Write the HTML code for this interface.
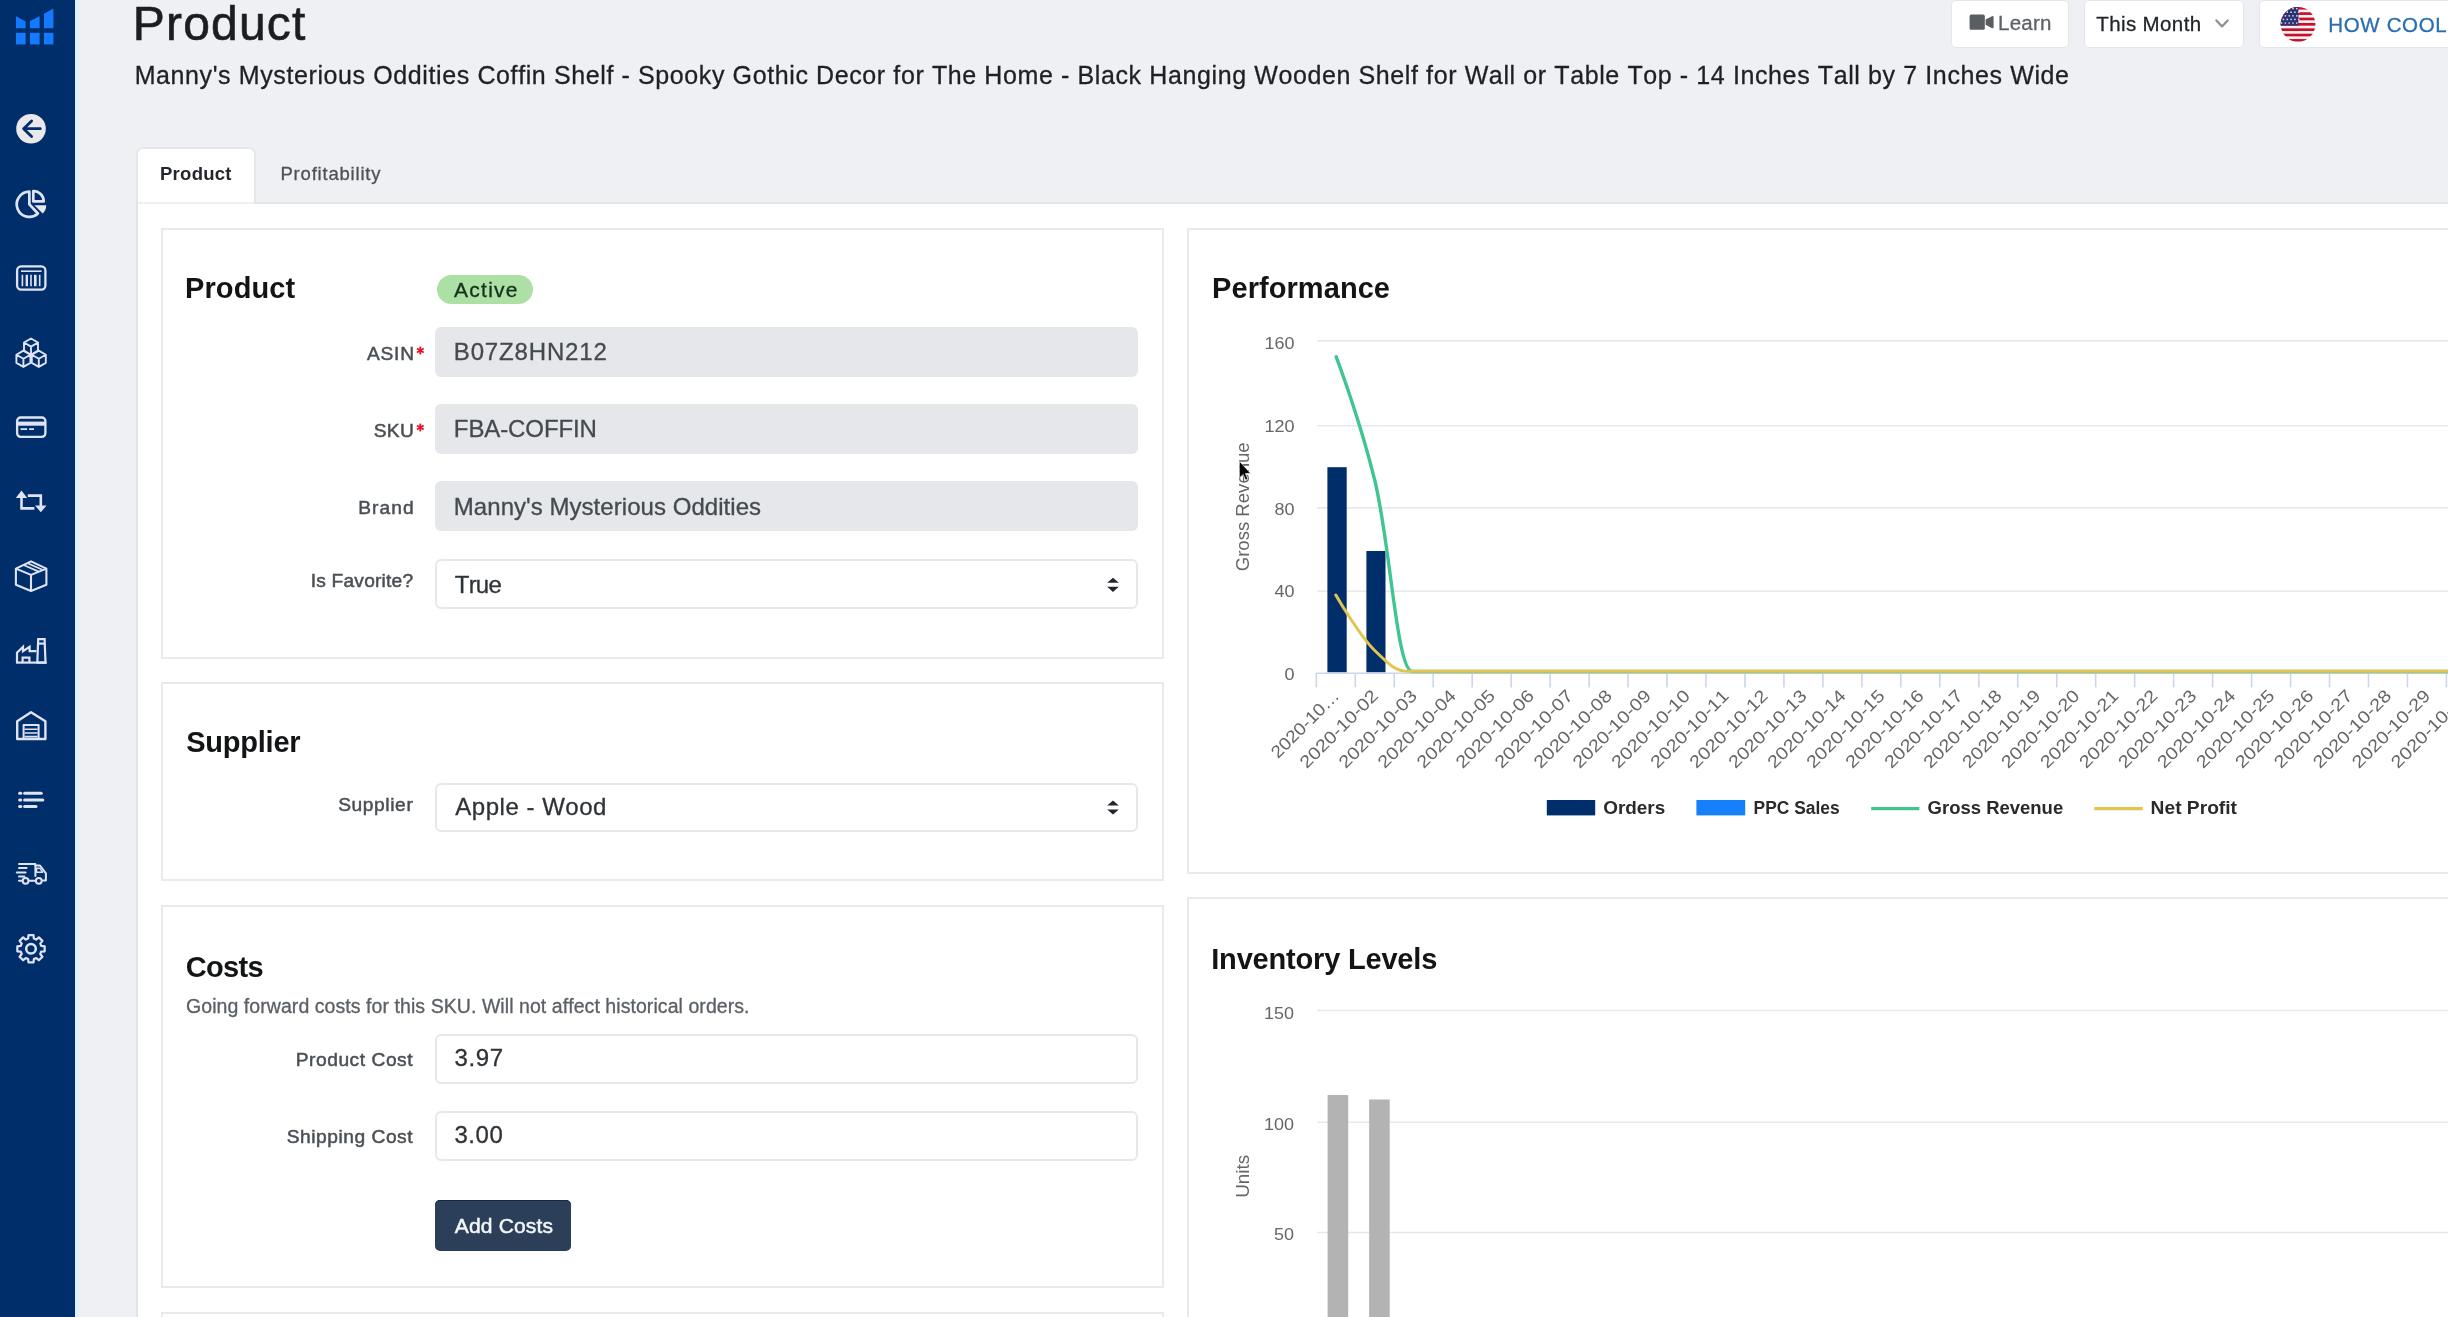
<!DOCTYPE html>
<html lang="en"><head><meta charset="utf-8"><title>Product</title>
<style>
html,body{margin:0;padding:0;}
body{width:2448px;height:1317px;overflow:hidden;background:#eef0f4;position:relative;
font-family:"Liberation Sans",sans-serif;font-kerning:none;-webkit-font-smoothing:antialiased;}
#wrap{position:absolute;left:0;top:0;width:2448px;height:1317px;overflow:hidden;will-change:transform;}
.t{position:absolute;white-space:nowrap;margin:0;padding:0;}
.r{position:absolute;}
svg.ov{position:absolute;left:0;top:0;}
svg text{font-family:"Liberation Sans",sans-serif;}
</style></head><body><div id="wrap">
<div class="r" style="left:0px;top:0px;width:75px;height:1317px;background:#002e6b;"></div>
<div class="r" style="left:75px;top:0px;width:4px;height:1317px;background:#e2effc;"></div>
<div class="r" style="left:79px;top:0px;width:1px;height:1317px;background:#e9f1f9;"></div>
<div class="t" style="left:132.76px;top:-5.74px;font-size:48px;line-height:60px;color:#1b1e21;letter-spacing:1.195px;-webkit-text-stroke:0.6px #1b1e21;">Product</div>
<div class="t" style="left:134.65px;top:59.33px;font-size:25px;line-height:32px;color:#1d2024;letter-spacing:0.609px;-webkit-text-stroke:0.3px #1d2024;">Manny&#x27;s Mysterious Oddities Coffin Shelf - Spooky Gothic Decor for The Home - Black Hanging Wooden Shelf for Wall or Table Top - 14 Inches Tall by 7 Inches Wide</div>
<div class="r" style="left:1951px;top:0px;width:118px;height:48px;background:#fff;border:1px solid #e3e6ea;border-radius:5px;box-sizing:border-box;"></div>
<div class="r" style="left:2084px;top:0px;width:160px;height:48px;background:#fff;border:1px solid #e3e6ea;border-radius:5px;box-sizing:border-box;"></div>
<div class="r" style="left:2259px;top:0px;width:220px;height:48px;background:#fff;border:1px solid #e3e6ea;border-radius:5px;box-sizing:border-box;"></div>
<div class="t" style="left:1998.12px;top:9.99px;font-size:20.5px;line-height:26px;color:#5a6268;letter-spacing:0.195px;-webkit-text-stroke:0.3px #5a6268;">Learn</div>
<div class="t" style="left:2096.24px;top:10.99px;font-size:20.5px;line-height:26px;color:#1f2327;letter-spacing:0.388px;-webkit-text-stroke:0.3px #1f2327;">This Month</div>
<div class="t" style="left:2328.32px;top:12.09px;font-size:20.5px;line-height:26px;color:#2a6fb0;letter-spacing:0.639px;-webkit-text-stroke:0.3px #2a6fb0;">HOW COOL</div>
<div class="r" style="left:136px;top:147px;width:120px;height:57px;background:#fff;border:2px solid #e4e7eb;border-radius:7px 7px 0 0;box-sizing:border-box;border-bottom:none;"></div>
<div class="r" style="left:136px;top:202px;width:2330px;height:1200px;background:#fff;border:2px solid #e1e4e8;box-sizing:border-box;"></div>
<div class="r" style="left:138px;top:202px;width:116px;height:2px;background:#edeff2;"></div>
<div class="t" style="left:159.96px;top:161.89px;font-size:18.5px;line-height:24px;color:#23272b;letter-spacing:0.279px;font-weight:bold;">Product</div>
<div class="t" style="left:280.48px;top:162.09px;font-size:18.5px;line-height:24px;color:#4b5157;letter-spacing:0.798px;-webkit-text-stroke:0.3px #4b5157;">Profitability</div>
<div class="r" style="left:161px;top:228px;width:1003px;height:431px;background:#fff;border:2px solid #e8ebee;box-sizing:border-box;"></div>
<div class="r" style="left:161px;top:682px;width:1003px;height:199px;background:#fff;border:2px solid #e8ebee;box-sizing:border-box;"></div>
<div class="r" style="left:161px;top:905px;width:1003px;height:383px;background:#fff;border:2px solid #e8ebee;box-sizing:border-box;"></div>
<div class="r" style="left:161px;top:1312px;width:1003px;height:88px;background:#fff;border:2px solid #e8ebee;box-sizing:border-box;"></div>
<div class="r" style="left:1187px;top:228px;width:1300px;height:646px;background:#fff;border:2px solid #e8ebee;box-sizing:border-box;"></div>
<div class="r" style="left:1187px;top:897px;width:1300px;height:503px;background:#fff;border:2px solid #e8ebee;box-sizing:border-box;"></div>
<div class="t" style="left:185.06px;top:270.45px;font-size:29px;line-height:37px;color:#121416;letter-spacing:0.089px;font-weight:bold;">Product</div>
<div class="r" style="left:437px;top:275px;width:96px;height:29px;background:#ace0a5;border-radius:15px;"></div>
<div class="t" style="left:453.96px;top:275.82px;font-size:21px;line-height:27px;color:#12301a;letter-spacing:1.278px;-webkit-text-stroke:0.3px #12301a;">Active</div>
<div class="r" style="left:435px;top:327px;width:703px;height:50px;background:#e5e7eb;border-radius:6px;"></div>
<div class="t" style="left:366.96px;top:341.54px;font-size:19.2px;line-height:24px;color:#4a4f54;letter-spacing:0.764px;-webkit-text-stroke:0.5px #4a4f54;">ASIN</div>
<div class="t" style="left:453.83px;top:337.48px;font-size:24px;line-height:30px;color:#434a50;letter-spacing:0.840px;-webkit-text-stroke:0.3px #434a50;">B07Z8HN212</div>
<div class="r" style="left:435px;top:404px;width:703px;height:50px;background:#e5e7eb;border-radius:6px;"></div>
<div class="t" style="left:373.63px;top:418.54px;font-size:19.2px;line-height:24px;color:#4a4f54;letter-spacing:0.438px;-webkit-text-stroke:0.5px #4a4f54;">SKU</div>
<div class="t" style="left:453.83px;top:414.18px;font-size:24px;line-height:30px;color:#434a50;letter-spacing:-0.096px;-webkit-text-stroke:0.3px #434a50;">FBA-COFFIN</div>
<div class="r" style="left:435px;top:481px;width:703px;height:50px;background:#e5e7eb;border-radius:6px;"></div>
<div class="t" style="left:358.23px;top:496.44px;font-size:19.2px;line-height:24px;color:#4a4f54;letter-spacing:1.070px;-webkit-text-stroke:0.5px #4a4f54;">Brand</div>
<div class="t" style="left:453.83px;top:491.78px;font-size:24px;line-height:30px;color:#434a50;letter-spacing:0.047px;-webkit-text-stroke:0.3px #434a50;">Manny&#x27;s Mysterious Oddities</div>
<div class="r" style="left:435px;top:559px;width:703px;height:50px;background:#fff;border:2px solid #e6e9ec;border-radius:6px;box-sizing:border-box;"></div>
<div class="t" style="left:310.73px;top:569.24px;font-size:19.2px;line-height:24px;color:#4a4f54;letter-spacing:0.198px;-webkit-text-stroke:0.5px #4a4f54;">Is Favorite?</div>
<div class="t" style="left:454.76px;top:570.28px;font-size:24px;line-height:30px;color:#2e3338;letter-spacing:-0.781px;-webkit-text-stroke:0.3px #2e3338;">True</div>
<div class="t" style="left:186.16px;top:724.45px;font-size:29px;line-height:37px;color:#121416;letter-spacing:-0.220px;font-weight:bold;">Supplier</div>
<div class="r" style="left:435px;top:783px;width:703px;height:49px;background:#fff;border:2px solid #e6e9ec;border-radius:6px;box-sizing:border-box;"></div>
<div class="t" style="left:338.13px;top:792.94px;font-size:19.2px;line-height:24px;color:#4a4f54;letter-spacing:0.607px;-webkit-text-stroke:0.5px #4a4f54;">Supplier</div>
<div class="t" style="left:455.25px;top:792.18px;font-size:24px;line-height:30px;color:#2e3338;letter-spacing:0.526px;-webkit-text-stroke:0.3px #2e3338;">Apple - Wood</div>
<div class="t" style="left:185.81px;top:948.65px;font-size:29px;line-height:37px;color:#121416;letter-spacing:-0.673px;font-weight:bold;">Costs</div>
<div class="t" style="left:186.02px;top:993.94px;font-size:19.5px;line-height:25px;color:#5b6065;letter-spacing:0.064px;-webkit-text-stroke:0.3px #5b6065;">Going forward costs for this SKU. Will not affect historical orders.</div>
<div class="r" style="left:435px;top:1034px;width:703px;height:50px;background:#fff;border:2px solid #e6e9ec;border-radius:6px;box-sizing:border-box;"></div>
<div class="t" style="left:295.73px;top:1047.74px;font-size:19.2px;line-height:24px;color:#4a4f54;letter-spacing:0.539px;-webkit-text-stroke:0.5px #4a4f54;">Product Cost</div>
<div class="t" style="left:454.39px;top:1043.38px;font-size:24px;line-height:30px;color:#2e3338;letter-spacing:0.703px;-webkit-text-stroke:0.3px #2e3338;">3.97</div>
<div class="r" style="left:435px;top:1111px;width:703px;height:50px;background:#fff;border:2px solid #e6e9ec;border-radius:6px;box-sizing:border-box;"></div>
<div class="t" style="left:286.63px;top:1124.54px;font-size:19.2px;line-height:24px;color:#4a4f54;letter-spacing:0.539px;-webkit-text-stroke:0.5px #4a4f54;">Shipping Cost</div>
<div class="t" style="left:454.39px;top:1120.28px;font-size:24px;line-height:30px;color:#2e3338;letter-spacing:0.614px;-webkit-text-stroke:0.3px #2e3338;">3.00</div>
<div class="r" style="left:435px;top:1200px;width:136px;height:51px;background:#2c3f58;border-radius:5px;box-shadow:inset 0 1px 0 #16264a;"></div>
<div class="t" style="left:454.86px;top:1211.52px;font-size:21px;line-height:27px;color:#f4f8fc;letter-spacing:0.153px;-webkit-text-stroke:0.5px #f4f8fc;">Add Costs</div>
<div class="t" style="left:1212.06px;top:270.45px;font-size:29px;line-height:37px;color:#121416;letter-spacing:0.063px;font-weight:bold;">Performance</div>
<div class="t" style="left:1211.26px;top:941.05px;font-size:29px;line-height:37px;color:#121416;letter-spacing:-0.189px;font-weight:bold;">Inventory Levels</div>
<svg class="ov" width="2448" height="1317" viewBox="0 0 2448 1317">
<g fill="#137bff">
<rect x="16" y="32.8" width="9.6" height="11.6"/>
<rect x="30" y="32.8" width="9.6" height="11.6"/>
<rect x="44" y="32.8" width="9.4" height="11.6"/>
<polygon points="16,16.3 25.6,21.4 25.6,28.3 16,28.3"/>
<polygon points="30,21 39.6,16.3 39.6,28.3 30,28.3"/>
<polygon points="44,13.7 53.4,8.6 53.4,28.3 44,28.3"/>
</g>
<circle cx="31" cy="128.7" r="14.8" fill="#e9e9ec"/>
<path d="M40.3 128.7 H23.6 M31.6 120.9 L23.6 128.7 L31.6 136.6" fill="none" stroke="#002e6b" stroke-width="2.8" stroke-linecap="round" stroke-linejoin="round"/>
<g fill="none" stroke="#dfe3f3" stroke-width="2.7" stroke-linejoin="round">
<path d="M29.35 191.70000000000002 A12.6 12.6 0 1 0 37.94 213.52 L29.35 204.3 Z"/>
<path d="M33.3 191.0 A10.4 10.4 0 0 1 43.699999999999996 201.4 L33.3 201.4 Z"/>
</g>
<path d="M34.4 205.2 L46.2 205.2 A11.8 11.8 0 0 1 42.74 213.54 Z" fill="#e9e9ec"/>
<rect x="17.1" y="266.4" width="28.3" height="23.2" rx="4" fill="none" stroke="#dfe3f3" stroke-width="2.3"/>
<path d="M21 271.2 H41.6" stroke="#dfe3f3" stroke-width="1.6"/>
<g stroke="#dfe3f3">
<path d="M22.4 274.8 V286.2" stroke-width="1.6"/>
<path d="M26.8 274.8 V286.2" stroke-width="2.4"/>
<path d="M31.0 274.8 V286.2" stroke-width="1.6"/>
<path d="M35.3 274.8 V286.2" stroke-width="2.6"/>
<path d="M39.7 274.8 V286.2" stroke-width="1.6"/>
</g>
<g fill="none" stroke="#dfe3f3" stroke-width="1.9" stroke-linejoin="round">
<path d="M31.00 338.48 L38.00 342.54 L38.00 350.66 L31.00 354.72 L24.00 350.66 L24.00 342.54 Z M24.00 342.54 L31 346.6 L38.00 342.54 M31 346.6 V354.72"/>
<path d="M23.40 350.68 L30.40 354.74 L30.40 362.86 L23.40 366.92 L16.40 362.86 L16.40 354.74 Z M16.40 354.74 L23.4 358.8 L30.40 354.74 M23.4 358.8 V366.92"/>
<path d="M38.80 350.68 L45.80 354.74 L45.80 362.86 L38.80 366.92 L31.80 362.86 L31.80 354.74 Z M31.80 354.74 L38.8 358.8 L45.80 354.74 M38.8 358.8 V366.92"/>
</g>
<rect x="17.1" y="417.5" width="28.3" height="19.4" rx="3.6" fill="none" stroke="#dfe3f3" stroke-width="2.3"/>
<rect x="17.1" y="421.6" width="28.3" height="4.1" fill="#dfe3f3"/>
<path d="M20.6 429.2 H27.2 M29.2 429.2 H34" stroke="#dfe3f3" stroke-width="1.7"/>
<g fill="none" stroke="#dfe3f3" stroke-width="2.6" stroke-linejoin="miter">
<path d="M21.5 496.5 V508.4 H34.4"/>
<path d="M27.8 495.6 H40.8 V507"/>
</g>
<polygon points="21.5,490.6 27.2,497.9 15.8,497.9" fill="#dfe3f3"/>
<polygon points="40.8,512.3 46.5,505.6 35.1,505.6" fill="#dfe3f3"/>
<g fill="none" stroke="#dfe3f3" stroke-width="2.1" stroke-linejoin="round">
<path d="M31 561.4 L46.4 568.6 V584.8 L31 591 L15.9 584.8 V568.6 Z"/>
<path d="M15.9 568.6 L31 574.9 L46.4 568.6 M31 574.9 V591"/>
<path d="M23.6 565 L38.7 571.6 M27.6 563.2 L42.4 569.8" stroke-width="1.7"/>
</g>
<g fill="none" stroke="#dfe3f3" stroke-width="2.2" stroke-linejoin="miter">
<path d="M17 662.6 V652.6 L23 646.8 V651.2 L29.6 646.8 V651.2 H36.4"/>
<path d="M38.2 639.2 H44.6 L45.5 662.6 H37.3 Z"/>
<path d="M38 643.6 H45"/>
<path d="M16 662.6 H46.6"/>
<path d="M22.6 662.6 V657.6 H29.4 V662.6"/>
</g>
<g fill="none" stroke="#dfe3f3" stroke-width="2.4" stroke-linejoin="round">
<path d="M17.2 739 V721.2 L31 712.2 L45.4 721.2 V739 Z"/>
<path d="M23.6 739 V725 H38.6 V739" stroke-width="2"/>
<path d="M24.6 729.2 H37.6 M24.6 733 H37.6 M24.6 736.6 H37.6" stroke-width="1.6"/>
</g>
<g stroke="#dfe3f3" stroke-width="3" stroke-linecap="round">
<path d="M24.6 793.2 H41.2"/>
<path d="M19.6 793.2 H20.8"/>
<path d="M24.6 799.9 H42.8"/>
<path d="M19.6 799.9 H20.8"/>
<path d="M24.6 806.6 H36"/>
<path d="M19.6 806.6 H20.8"/>
</g>
<g fill="none" stroke="#dfe3f3" stroke-width="2" stroke-linejoin="round" stroke-linecap="round">
<path d="M19 864 H35.4 V876"/>
<path d="M35.4 865.6 H40 L45.9 873.4 V880.6 H43"/>
<path d="M36.6 868.2 H39.6 L42.6 872.2 H36.6 Z" stroke-width="1.4"/>
<path d="M19 868 H26.6 M16.8 872.4 H25.6 M19 876.4 H24.4"/>
<path d="M19 880.8 H22.4 M28.8 880.8 H35.4"/>
<circle cx="25.6" cy="880.8" r="2.9"/>
<circle cx="38.8" cy="880.8" r="2.9"/>
</g>
<g fill="none" stroke="#dfe3f3" stroke-width="2.2" stroke-linejoin="round">
<path d="M41.20 945.92 L44.67 946.30 L44.67 951.30 L41.20 951.68 L40.25 953.98 L42.43 956.70 L38.90 960.23 L36.18 958.05 L33.88 959.00 L33.50 962.47 L28.50 962.47 L28.12 959.00 L25.82 958.05 L23.10 960.23 L19.57 956.70 L21.75 953.98 L20.80 951.68 L17.33 951.30 L17.33 946.30 L20.80 945.92 L21.75 943.62 L19.57 940.90 L23.10 937.37 L25.82 939.55 L28.12 938.60 L28.50 935.13 L33.50 935.13 L33.88 938.60 L36.18 939.55 L38.90 937.37 L42.43 940.90 L40.25 943.62 Z" transform="rotate(-90 31 948.8)"/>
<circle cx="31" cy="948.8" r="4.8" stroke-width="2.5"/>
</g>
<rect x="1969.6" y="14.6" width="15.2" height="15.2" rx="1.6" fill="#595e63"/>
<path d="M1985.6 19.6 L1992 16.2 Q1993.6 15.8 1993.6 17.4 V27 Q1993.6 28.6 1992 28.2 L1985.6 24.8 Z" fill="#595e63"/>
<path d="M2216.4 20.4 L2222 26.4 L2227.6 20.4" fill="none" stroke="#8a8f94" stroke-width="2.2" stroke-linecap="round" stroke-linejoin="round"/>
<defs><clipPath id="fc"><circle cx="2298" cy="24.3" r="17.4"/></clipPath></defs>
<g clip-path="url(#fc)">
<rect x="2278" y="4" width="40" height="40" fill="#f4f1f1"/>
<rect x="2278" y="6.90" width="40" height="2.68" fill="#c8102e"/>
<rect x="2278" y="12.26" width="40" height="2.68" fill="#c8102e"/>
<rect x="2278" y="17.62" width="40" height="2.68" fill="#c8102e"/>
<rect x="2278" y="22.98" width="40" height="2.68" fill="#c8102e"/>
<rect x="2278" y="28.34" width="40" height="2.68" fill="#c8102e"/>
<rect x="2278" y="33.70" width="40" height="2.68" fill="#c8102e"/>
<rect x="2278" y="39.06" width="40" height="2.68" fill="#c8102e"/>
<rect x="2278" y="4" width="20.4" height="21.6" fill="#2a3274"/>
<circle cx="2281.6" cy="8.6" r="0.85" fill="#d9dbe8"/>
<circle cx="2285.4" cy="8.6" r="0.85" fill="#d9dbe8"/>
<circle cx="2289.2" cy="8.6" r="0.85" fill="#d9dbe8"/>
<circle cx="2293.0" cy="8.6" r="0.85" fill="#d9dbe8"/>
<circle cx="2296.8" cy="8.6" r="0.85" fill="#d9dbe8"/>
<circle cx="2283.5" cy="12.2" r="0.85" fill="#d9dbe8"/>
<circle cx="2287.3" cy="12.2" r="0.85" fill="#d9dbe8"/>
<circle cx="2291.1" cy="12.2" r="0.85" fill="#d9dbe8"/>
<circle cx="2294.9" cy="12.2" r="0.85" fill="#d9dbe8"/>
<circle cx="2298.7" cy="12.2" r="0.85" fill="#d9dbe8"/>
<circle cx="2281.6" cy="15.8" r="0.85" fill="#d9dbe8"/>
<circle cx="2285.4" cy="15.8" r="0.85" fill="#d9dbe8"/>
<circle cx="2289.2" cy="15.8" r="0.85" fill="#d9dbe8"/>
<circle cx="2293.0" cy="15.8" r="0.85" fill="#d9dbe8"/>
<circle cx="2296.8" cy="15.8" r="0.85" fill="#d9dbe8"/>
<circle cx="2283.5" cy="19.4" r="0.85" fill="#d9dbe8"/>
<circle cx="2287.3" cy="19.4" r="0.85" fill="#d9dbe8"/>
<circle cx="2291.1" cy="19.4" r="0.85" fill="#d9dbe8"/>
<circle cx="2294.9" cy="19.4" r="0.85" fill="#d9dbe8"/>
<circle cx="2298.7" cy="19.4" r="0.85" fill="#d9dbe8"/>
<circle cx="2281.6" cy="23.0" r="0.85" fill="#d9dbe8"/>
<circle cx="2285.4" cy="23.0" r="0.85" fill="#d9dbe8"/>
<circle cx="2289.2" cy="23.0" r="0.85" fill="#d9dbe8"/>
<circle cx="2293.0" cy="23.0" r="0.85" fill="#d9dbe8"/>
<circle cx="2296.8" cy="23.0" r="0.85" fill="#d9dbe8"/>
</g>
<g stroke="#e0182c" stroke-width="1.9" stroke-linecap="butt">
<path d="M420.3 350.5 L420.30 346.60"/>
<path d="M420.3 350.5 L423.68 348.55"/>
<path d="M420.3 350.5 L423.68 352.45"/>
<path d="M420.3 350.5 L420.30 354.40"/>
<path d="M420.3 350.5 L416.92 348.55"/>
<path d="M420.3 350.5 L416.92 352.45"/>
</g>
<g stroke="#e0182c" stroke-width="1.9" stroke-linecap="butt">
<path d="M420.3 427.5 L420.30 423.60"/>
<path d="M420.3 427.5 L423.68 425.55"/>
<path d="M420.3 427.5 L423.68 429.45"/>
<path d="M420.3 427.5 L420.30 431.40"/>
<path d="M420.3 427.5 L416.92 425.55"/>
<path d="M420.3 427.5 L416.92 429.45"/>
</g>
<polygon points="1107.2,582.8 1118.8,582.8 1113,577.8" fill="#22262a"/>
<polygon points="1107.2,586.8 1118.8,586.8 1113,592" fill="#22262a"/>
<polygon points="1107.2,805.4 1118.8,805.4 1113,800.4" fill="#22262a"/>
<polygon points="1107.2,809.4 1118.8,809.4 1113,814.6" fill="#22262a"/>
<path d="M1317 340.9 H2448" stroke="#e7e8ea" stroke-width="1.6"/>
<path d="M1317 425.7 H2448" stroke="#e7e8ea" stroke-width="1.6"/>
<path d="M1317 507.9 H2448" stroke="#e7e8ea" stroke-width="1.6"/>
<path d="M1317 591.2 H2448" stroke="#e7e8ea" stroke-width="1.6"/>
<path d="M1316.3 673.2 H2448" stroke="#ccd6eb" stroke-width="1.6"/>
<path d="M1316.30 673 V687.4" stroke="#ccd6eb" stroke-width="1.6"/>
<path d="M1355.27 673 V687.4" stroke="#ccd6eb" stroke-width="1.6"/>
<path d="M1394.24 673 V687.4" stroke="#ccd6eb" stroke-width="1.6"/>
<path d="M1433.21 673 V687.4" stroke="#ccd6eb" stroke-width="1.6"/>
<path d="M1472.18 673 V687.4" stroke="#ccd6eb" stroke-width="1.6"/>
<path d="M1511.15 673 V687.4" stroke="#ccd6eb" stroke-width="1.6"/>
<path d="M1550.12 673 V687.4" stroke="#ccd6eb" stroke-width="1.6"/>
<path d="M1589.09 673 V687.4" stroke="#ccd6eb" stroke-width="1.6"/>
<path d="M1628.06 673 V687.4" stroke="#ccd6eb" stroke-width="1.6"/>
<path d="M1667.03 673 V687.4" stroke="#ccd6eb" stroke-width="1.6"/>
<path d="M1706.00 673 V687.4" stroke="#ccd6eb" stroke-width="1.6"/>
<path d="M1744.97 673 V687.4" stroke="#ccd6eb" stroke-width="1.6"/>
<path d="M1783.94 673 V687.4" stroke="#ccd6eb" stroke-width="1.6"/>
<path d="M1822.91 673 V687.4" stroke="#ccd6eb" stroke-width="1.6"/>
<path d="M1861.88 673 V687.4" stroke="#ccd6eb" stroke-width="1.6"/>
<path d="M1900.85 673 V687.4" stroke="#ccd6eb" stroke-width="1.6"/>
<path d="M1939.82 673 V687.4" stroke="#ccd6eb" stroke-width="1.6"/>
<path d="M1978.79 673 V687.4" stroke="#ccd6eb" stroke-width="1.6"/>
<path d="M2017.76 673 V687.4" stroke="#ccd6eb" stroke-width="1.6"/>
<path d="M2056.73 673 V687.4" stroke="#ccd6eb" stroke-width="1.6"/>
<path d="M2095.70 673 V687.4" stroke="#ccd6eb" stroke-width="1.6"/>
<path d="M2134.67 673 V687.4" stroke="#ccd6eb" stroke-width="1.6"/>
<path d="M2173.64 673 V687.4" stroke="#ccd6eb" stroke-width="1.6"/>
<path d="M2212.61 673 V687.4" stroke="#ccd6eb" stroke-width="1.6"/>
<path d="M2251.58 673 V687.4" stroke="#ccd6eb" stroke-width="1.6"/>
<path d="M2290.55 673 V687.4" stroke="#ccd6eb" stroke-width="1.6"/>
<path d="M2329.52 673 V687.4" stroke="#ccd6eb" stroke-width="1.6"/>
<path d="M2368.49 673 V687.4" stroke="#ccd6eb" stroke-width="1.6"/>
<path d="M2407.46 673 V687.4" stroke="#ccd6eb" stroke-width="1.6"/>
<path d="M2446.43 673 V687.4" stroke="#ccd6eb" stroke-width="1.6"/>
<text x="1294.4" y="349.2" font-size="17" fill="#666666" text-anchor="end" textLength="30.0" lengthAdjust="spacingAndGlyphs">160</text>
<text x="1294.4" y="432.0" font-size="17" fill="#666666" text-anchor="end" textLength="30.0" lengthAdjust="spacingAndGlyphs">120</text>
<text x="1294.4" y="514.7" font-size="17" fill="#666666" text-anchor="end" textLength="20.0" lengthAdjust="spacingAndGlyphs">80</text>
<text x="1294.4" y="597.4" font-size="17" fill="#666666" text-anchor="end" textLength="20.0" lengthAdjust="spacingAndGlyphs">40</text>
<text x="1294.4" y="680.0" font-size="17" fill="#666666" text-anchor="end" textLength="10.0" lengthAdjust="spacingAndGlyphs">0</text>
<text transform="translate(1249.2 506.8) rotate(-90)" font-size="18.5" fill="#666666" text-anchor="middle" textLength="129" lengthAdjust="spacingAndGlyphs">Gross Revenue</text>
<rect x="1327.4" y="467.2" width="19.3" height="205" fill="#002e6b"/>
<rect x="1366.4" y="551" width="19.1" height="121.2" fill="#002e6b"/>
<path d="M1336.2 356.8 C1336.2 356.8 1359.1 417 1374.7 480 C1390.3 543 1396.6 671.5 1412.4 671.5 H2448" fill="none" stroke="#40c592" stroke-width="3.4" stroke-linecap="round" stroke-linejoin="round"/>
<path d="M1335.8 595 C1335.8 595 1359.1 635.2 1374.7 650.5 C1390.3 665.8 1396 671.3 1409 671.3 H2448" fill="none" stroke="#e2c450" stroke-width="3" stroke-linecap="round" stroke-linejoin="round"/>
<text transform="translate(1340.28 696.9)  rotate(-45)" font-size="17.5" fill="#666666" text-anchor="end" textLength="88" lengthAdjust="spacingAndGlyphs">2020-10…</text>
<text transform="translate(1379.25 696.9)  rotate(-45)" font-size="17.5" fill="#666666" text-anchor="end" textLength="102.4" lengthAdjust="spacingAndGlyphs">2020-10-02</text>
<text transform="translate(1418.22 696.9)  rotate(-45)" font-size="17.5" fill="#666666" text-anchor="end" textLength="102.4" lengthAdjust="spacingAndGlyphs">2020-10-03</text>
<text transform="translate(1457.19 696.9)  rotate(-45)" font-size="17.5" fill="#666666" text-anchor="end" textLength="102.4" lengthAdjust="spacingAndGlyphs">2020-10-04</text>
<text transform="translate(1496.16 696.9)  rotate(-45)" font-size="17.5" fill="#666666" text-anchor="end" textLength="102.4" lengthAdjust="spacingAndGlyphs">2020-10-05</text>
<text transform="translate(1535.13 696.9)  rotate(-45)" font-size="17.5" fill="#666666" text-anchor="end" textLength="102.4" lengthAdjust="spacingAndGlyphs">2020-10-06</text>
<text transform="translate(1574.11 696.9)  rotate(-45)" font-size="17.5" fill="#666666" text-anchor="end" textLength="102.4" lengthAdjust="spacingAndGlyphs">2020-10-07</text>
<text transform="translate(1613.07 696.9)  rotate(-45)" font-size="17.5" fill="#666666" text-anchor="end" textLength="102.4" lengthAdjust="spacingAndGlyphs">2020-10-08</text>
<text transform="translate(1652.05 696.9)  rotate(-45)" font-size="17.5" fill="#666666" text-anchor="end" textLength="102.4" lengthAdjust="spacingAndGlyphs">2020-10-09</text>
<text transform="translate(1691.01 696.9)  rotate(-45)" font-size="17.5" fill="#666666" text-anchor="end" textLength="102.4" lengthAdjust="spacingAndGlyphs">2020-10-10</text>
<text transform="translate(1729.98 696.9)  rotate(-45)" font-size="17.5" fill="#666666" text-anchor="end" textLength="102.4" lengthAdjust="spacingAndGlyphs">2020-10-11</text>
<text transform="translate(1768.95 696.9)  rotate(-45)" font-size="17.5" fill="#666666" text-anchor="end" textLength="102.4" lengthAdjust="spacingAndGlyphs">2020-10-12</text>
<text transform="translate(1807.92 696.9)  rotate(-45)" font-size="17.5" fill="#666666" text-anchor="end" textLength="102.4" lengthAdjust="spacingAndGlyphs">2020-10-13</text>
<text transform="translate(1846.89 696.9)  rotate(-45)" font-size="17.5" fill="#666666" text-anchor="end" textLength="102.4" lengthAdjust="spacingAndGlyphs">2020-10-14</text>
<text transform="translate(1885.86 696.9)  rotate(-45)" font-size="17.5" fill="#666666" text-anchor="end" textLength="102.4" lengthAdjust="spacingAndGlyphs">2020-10-15</text>
<text transform="translate(1924.84 696.9)  rotate(-45)" font-size="17.5" fill="#666666" text-anchor="end" textLength="102.4" lengthAdjust="spacingAndGlyphs">2020-10-16</text>
<text transform="translate(1963.80 696.9)  rotate(-45)" font-size="17.5" fill="#666666" text-anchor="end" textLength="102.4" lengthAdjust="spacingAndGlyphs">2020-10-17</text>
<text transform="translate(2002.78 696.9)  rotate(-45)" font-size="17.5" fill="#666666" text-anchor="end" textLength="102.4" lengthAdjust="spacingAndGlyphs">2020-10-18</text>
<text transform="translate(2041.74 696.9)  rotate(-45)" font-size="17.5" fill="#666666" text-anchor="end" textLength="102.4" lengthAdjust="spacingAndGlyphs">2020-10-19</text>
<text transform="translate(2080.72 696.9)  rotate(-45)" font-size="17.5" fill="#666666" text-anchor="end" textLength="102.4" lengthAdjust="spacingAndGlyphs">2020-10-20</text>
<text transform="translate(2119.68 696.9)  rotate(-45)" font-size="17.5" fill="#666666" text-anchor="end" textLength="102.4" lengthAdjust="spacingAndGlyphs">2020-10-21</text>
<text transform="translate(2158.65 696.9)  rotate(-45)" font-size="17.5" fill="#666666" text-anchor="end" textLength="102.4" lengthAdjust="spacingAndGlyphs">2020-10-22</text>
<text transform="translate(2197.62 696.9)  rotate(-45)" font-size="17.5" fill="#666666" text-anchor="end" textLength="102.4" lengthAdjust="spacingAndGlyphs">2020-10-23</text>
<text transform="translate(2236.59 696.9)  rotate(-45)" font-size="17.5" fill="#666666" text-anchor="end" textLength="102.4" lengthAdjust="spacingAndGlyphs">2020-10-24</text>
<text transform="translate(2275.57 696.9)  rotate(-45)" font-size="17.5" fill="#666666" text-anchor="end" textLength="102.4" lengthAdjust="spacingAndGlyphs">2020-10-25</text>
<text transform="translate(2314.53 696.9)  rotate(-45)" font-size="17.5" fill="#666666" text-anchor="end" textLength="102.4" lengthAdjust="spacingAndGlyphs">2020-10-26</text>
<text transform="translate(2353.51 696.9)  rotate(-45)" font-size="17.5" fill="#666666" text-anchor="end" textLength="102.4" lengthAdjust="spacingAndGlyphs">2020-10-27</text>
<text transform="translate(2392.47 696.9)  rotate(-45)" font-size="17.5" fill="#666666" text-anchor="end" textLength="102.4" lengthAdjust="spacingAndGlyphs">2020-10-28</text>
<text transform="translate(2431.44 696.9)  rotate(-45)" font-size="17.5" fill="#666666" text-anchor="end" textLength="102.4" lengthAdjust="spacingAndGlyphs">2020-10-29</text>
<text transform="translate(2470.41 696.9)  rotate(-45)" font-size="17.5" fill="#666666" text-anchor="end" textLength="102.4" lengthAdjust="spacingAndGlyphs">2020-10-30</text>
<rect x="1546.8" y="800" width="48.4" height="15.4" fill="#002e6b"/>
<text x="1603.2" y="813.8" font-size="17.5" font-weight="bold" fill="#2a2a2a" textLength="62" lengthAdjust="spacingAndGlyphs">Orders</text>
<rect x="1696.4" y="800" width="48.8" height="15.4" fill="#1580fa"/>
<text x="1753.6" y="813.8" font-size="17.5" font-weight="bold" fill="#2a2a2a" textLength="86" lengthAdjust="spacingAndGlyphs">PPC Sales</text>
<path d="M1871.2 808.6 H1919.4" stroke="#40c592" stroke-width="3.2"/>
<text x="1927.6" y="813.8" font-size="17.5" font-weight="bold" fill="#2a2a2a" textLength="135.6" lengthAdjust="spacingAndGlyphs">Gross Revenue</text>
<path d="M2094.2 808.6 H2142.8" stroke="#e2c450" stroke-width="3.2"/>
<text x="2150.6" y="813.8" font-size="17.5" font-weight="bold" fill="#2a2a2a" textLength="86.4" lengthAdjust="spacingAndGlyphs">Net Profit</text>
<path d="M1317 1010.5 H2448" stroke="#e7e8ea" stroke-width="1.6"/>
<path d="M1317 1122.2 H2448" stroke="#e7e8ea" stroke-width="1.6"/>
<path d="M1317 1232.5 H2448" stroke="#e7e8ea" stroke-width="1.6"/>
<text x="1294" y="1019.2" font-size="17" fill="#666666" text-anchor="end" textLength="30.0" lengthAdjust="spacingAndGlyphs">150</text>
<text x="1294" y="1129.7" font-size="17" fill="#666666" text-anchor="end" textLength="30.0" lengthAdjust="spacingAndGlyphs">100</text>
<text x="1294" y="1239.9" font-size="17" fill="#666666" text-anchor="end" textLength="20.0" lengthAdjust="spacingAndGlyphs">50</text>
<text transform="translate(1249 1176.3) rotate(-90)" font-size="18" fill="#666666" text-anchor="middle" textLength="43" lengthAdjust="spacingAndGlyphs">Units</text>
<rect x="1327.6" y="1095" width="20.6" height="240" fill="#b3b3b3"/>
<rect x="1369.1" y="1099.5" width="20.6" height="240" fill="#b3b3b3"/>
<path d="M1239.4 461.2 V477.8 L1243.2 474.4 L1245.6 480 L1247.8 479 L1245.4 473.6 L1250.4 473.2 Z" fill="#050505" stroke="#f4f4f4" stroke-width="0.6"/>
</svg>
</div></body></html>
